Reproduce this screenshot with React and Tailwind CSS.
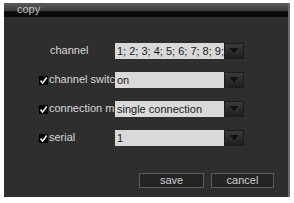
import React from "react";

function Check() {
  return (
    <div className="w-[9px] h-[9px] bg-black flex items-center justify-center">
      <svg width="9" height="9" viewBox="0 0 9 9">
        <path d="M1.5 4.6 L3.6 7 L7.8 1.6" stroke="#f2f2f2" strokeWidth="1.6" fill="none" />
      </svg>
    </div>
  );
}

function Drop() {
  return (
    <div className="w-[20px] h-[16px] border border-[#1c1c1c] bg-gradient-to-b from-[#3a3a3a] to-[#1e1e1e] flex items-center justify-center">
      <svg width="12" height="8" viewBox="0 0 12 8">
        <path d="M0.5 0.5 L11.5 0.5 L6 7.5 Z" fill="#121212" stroke="#444" strokeWidth="0.6" />
      </svg>
    </div>
  );
}

function Row({ checked, label, value }) {
  return (
    <div className="flex items-center h-[16px]">
      <div className="w-[10px] flex items-center">{checked ? <Check /> : null}</div>
      <div className={`w-[66px] overflow-hidden whitespace-nowrap text-[#d8d8d8] -mt-[2px] ${checked ? "" : "pl-[1px]"}`}>{label}</div>
      <div className="w-[109px] h-[16px] bg-[#d9d9d9] text-[#1a1a1a] pl-[2px] leading-[16px] overflow-hidden whitespace-nowrap">{value}</div>
      <Drop />
    </div>
  );
}

export default function App() {
  return (
    <div className="w-[294px] h-[203px] bg-white pt-[3px] pl-[4px] font-['Liberation_Sans',Arial,sans-serif] text-[11px] leading-[13px]">
      <div className="w-[286px] h-[194px] bg-[#2e2e2e] flex flex-col border-r-2 border-[#6a6a6a]">
        <div className="h-[14px] bg-[linear-gradient(to_bottom,#5c5c5c_0%,#3c3c3c_55%,#0a0a0a_62%,#0a0a0a_100%)] pl-[13px] text-[#c4c4c4] leading-[12px]">copy</div>
        <div className="flex flex-col pl-[35px] pt-[26px] gap-[13px]">
          <Row label="channel" value="1; 2; 3; 4; 5; 6; 7; 8; 9;" />
          <Row checked label="channel switch" value="on" />
          <Row checked label="connection mode" value="single connection" />
          <Row checked label="serial" value="1" />
        </div>
        <div className="flex justify-end gap-[7px] pr-[14px] mt-[27px]">
          <button className="w-[65px] h-[15px] bg-[#242424] border border-[#5a5a5a] text-[#cfcfcf] text-[11px] leading-[13px]">save</button>
          <button className="w-[63px] h-[15px] bg-[#242424] border border-[#5a5a5a] text-[#cfcfcf] text-[11px] leading-[13px]">cancel</button>
        </div>
      </div>
    </div>
  );
}
